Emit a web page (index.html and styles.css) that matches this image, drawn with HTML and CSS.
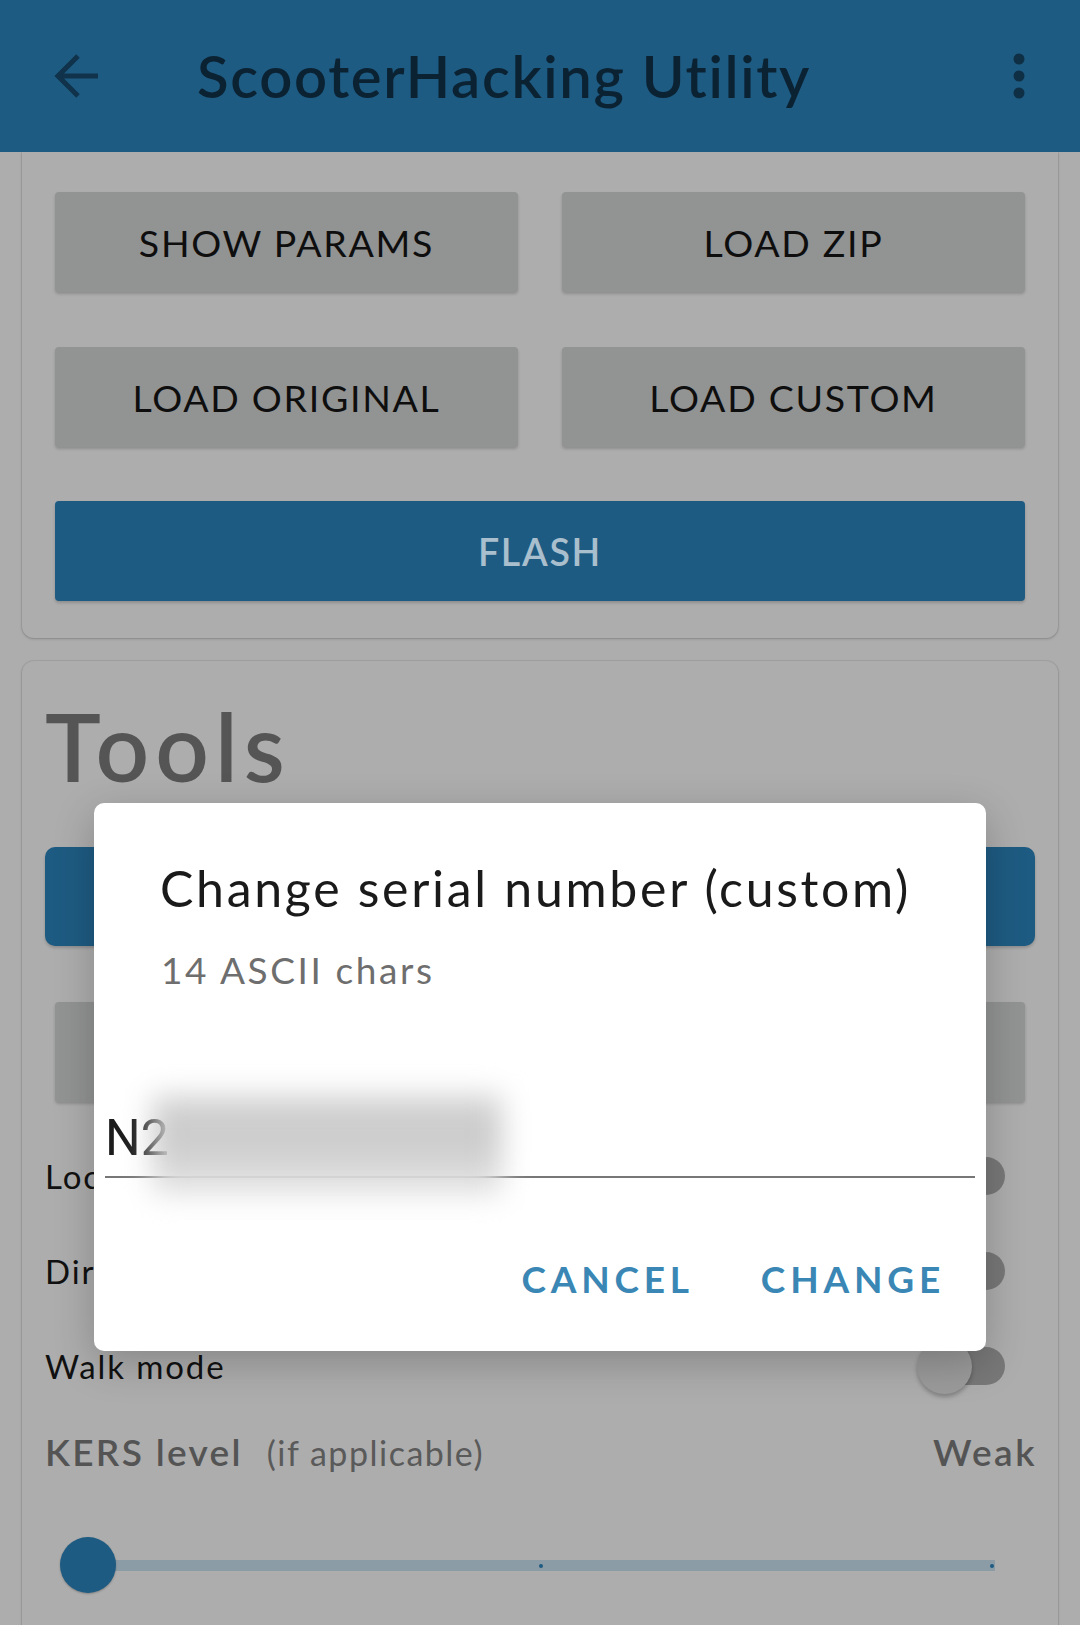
FILE: index.html
```html
<!DOCTYPE html>
<html lang="en">
<head>
<meta charset="utf-8">
<title>ScooterHacking Utility</title>
<link rel="stylesheet" href="styles.css">
</head>
<body>
<div class="screen">
  <header class="appbar">
    <svg class="back" width="46" height="46" viewBox="0 0 46 46" aria-hidden="true">
      <path d="M44 23 H4 M24 3 L4 23 L24 43" fill="none" stroke="#10324a" stroke-width="5"/>
    </svg>
    <h1 class="title">ScooterHacking Utility</h1>
    <svg class="menu" width="12" height="46" viewBox="0 0 12 46" aria-hidden="true">
      <circle cx="6" cy="6" r="5.5" fill="#0f2f45"/>
      <circle cx="6" cy="23" r="5.5" fill="#0f2f45"/>
      <circle cx="6" cy="40" r="5.5" fill="#0f2f45"/>
    </svg>
  </header>

  <main class="content">
    <section class="card card-top">
      <div class="btn-grid">
        <div class="btn">SHOW PARAMS</div>
        <div class="btn">LOAD ZIP</div>
        <div class="btn">LOAD ORIGINAL</div>
        <div class="btn">LOAD CUSTOM</div>
      </div>
      <div class="btn btn-primary flash">FLASH</div>
    </section>

    <section class="card card-tools">
      <h2 class="tools-title">Tools</h2>
      <div class="btn btn-primary wide" aria-label="Change serial number"></div>
      <div class="btn-grid tools-grid">
        <div class="btn" aria-label="Tool"></div>
        <div class="btn" aria-label="Tool"></div>
      </div>
      <div class="toggle-row"><span>Lock</span><span class="switch"><span class="thumb"></span></span></div>
      <div class="toggle-row"><span>Dire</span><span class="switch"><span class="thumb"></span></span></div>
      <div class="toggle-row"><span>Walk mode</span><span class="switch"><span class="thumb"></span></span></div>
      <div class="kers-row">
        <span class="kers-label">KERS level<small>(if applicable)</small></span>
        <span class="kers-value">Weak</span>
      </div>
      <div class="slider">
        <div class="track"><span class="tick mid"></span><span class="tick end"></span></div>
        <span class="slider-thumb"></span>
      </div>
    </section>
  </main>

  <div class="dialog" role="dialog">
    <h3 class="dialog-title">Change serial number (custom)</h3>
    <p class="dialog-sub">14 ASCII chars</p>
    <div class="input">N2</div>
    <div class="blur"></div>
    <div class="actions">
      <span class="action">CANCEL</span>
      <span class="action">CHANGE</span>
    </div>
  </div>
</div>
</body>
</html>
```

FILE: styles.css
```css
* { box-sizing: border-box; }
html, body { margin: 0; padding: 0; }
body {
  background: #adadad;
  font-family: "Lato", "Noto Sans", sans-serif;
}
.screen {
  position: relative;
  width: 1080px;
  height: 1625px;
  overflow: hidden;
  background: #adadad;
}

/* App bar */
.appbar {
  position: relative;
  z-index: 2;
  height: 152px;
  background: #1e5b82;
  display: flex;
  align-items: center;
  padding: 0 55px 0 54px;
}
.back { display: block; }
.title {
  margin: 0 0 0 97px;
  font-size: 58px;
  line-height: 70px;
  font-weight: 600;
  letter-spacing: 1.65px;
  color: #0b2233;
  flex: 1;
}
.menu { display: block; }

/* Cards */
.content { padding: 0 22px; }
.card {
  background: #adadad;
  border-radius: 12px;
  box-shadow: 0 0 0 1px rgba(0,0,0,0.06), 0 1px 3px rgba(0,0,0,0.18);
}
.card-top {
  border-radius: 0 0 12px 12px;
  padding: 40px 33px 37px;
}
.btn-grid {
  display: grid;
  grid-template-columns: 1fr 1fr;
  column-gap: 44px;
  row-gap: 55px;
}
.btn {
  height: 100px;
  display: flex;
  align-items: center;
  justify-content: center;
  background: #929393;
  border-radius: 4px;
  box-shadow: 0 2px 3px rgba(0,0,0,0.18);
  font-size: 37.5px;
  letter-spacing: 1.7px;
  color: #0e0e0e;
}
.btn-primary {
  background: #1e5b82;
  color: #a9bfcd;
  font-weight: 600;
}
.flash { margin-top: 54px; }

.card-tools {
  margin-top: 23px;
  padding: 38px 23px 200px;
}
.tools-title {
  margin: 0;
  font-size: 94px;
  line-height: 94px;
  font-weight: 600;
  letter-spacing: 6px;
  color: #555555;
}
.wide {
  margin-top: 54px;
  height: 99px;
  border-radius: 10px;
}
.tools-grid {
  margin: 56px 10px 0;
}
.toggle-row {
  height: 95px;
  display: flex;
  align-items: center;
  justify-content: space-between;
  padding-right: 30px;
  font-size: 33px;
  letter-spacing: 1.9px;
  color: #111111;
}
.tools-grid + .toggle-row { margin-top: 26px; }
.switch {
  position: relative;
  width: 80px;
  height: 38px;
  border-radius: 19px;
  background: #787878;
}
.thumb {
  position: absolute;
  left: -8px;
  top: -8px;
  width: 55px;
  height: 55px;
  border-radius: 50%;
  background: #9b9b9b;
  box-shadow: 0 3px 4px rgba(0,0,0,0.25);
}
.kers-row {
  margin-top: 14px;
  height: 50px;
  line-height: 50px;
  display: flex;
  justify-content: space-between;
  font-size: 37px;
  font-weight: 600;
  letter-spacing: 2.3px;
  color: #545454;
}
.kers-label small {
  font-size: 34px;
  font-weight: 400;
  letter-spacing: 1.5px;
  margin-left: 24px;
  color: #5a5a5a;
}
.kers-value { letter-spacing: 2.5px; margin-right: -2px; }
.slider {
  position: relative;
  height: 56px;
  margin: 60px 40px 0 15px;
  display: flex;
  align-items: center;
}
.track {
  position: relative;
  flex: 1;
  margin-left: 28px;
  height: 11px;
  background: #8b9ca6;
}
.tick {
  position: absolute;
  top: 4px;
  width: 4px;
  height: 4px;
  border-radius: 50%;
  background: #1e5b82;
}
.tick.mid { left: 49.7%; }
.tick.end { right: 1px; }
.slider-thumb {
  position: absolute;
  left: 0;
  top: 0;
  width: 56px;
  height: 56px;
  border-radius: 50%;
  background: #1d5b82;
  box-shadow: 0 1px 2px rgba(0,0,0,0.25);
}

/* Dialog */
.dialog {
  position: absolute;
  z-index: 5;
  left: 94px;
  top: 803px;
  width: 892px;
  height: 548px;
  background: #ffffff;
  border-radius: 10px;
  box-shadow: 0 12px 40px rgba(0,0,0,0.22);
  padding: 55px 11px 0;
}
.dialog-title {
  margin: 0 0 0 55px;
  font-size: 50px;
  line-height: 60px;
  font-weight: 400;
  letter-spacing: 2.7px;
  color: #1a1a1a;
}
.dialog-sub {
  margin: 30px 0 0 56px;
  font-size: 37px;
  line-height: 44px;
  letter-spacing: 2.6px;
  color: #6e6e6e;
}
.input {
  margin-top: 116px;
  padding: 0 0 8px 0;
  font-family: "Roboto", "Noto Sans", sans-serif;
  font-size: 50px;
  line-height: 60px;
  color: #1c1c1c;
  border-bottom: 2px solid #777777;
}
.blur {
  position: absolute;
  left: 58px;
  top: 292px;
  width: 350px;
  height: 100px;
  background: linear-gradient(#d4d4d4, #cacaca 45%, #e6e6e6);
  filter: blur(14px);
}
.actions {
  margin-top: 79px;
  display: flex;
  justify-content: flex-end;
  gap: 67px;
  padding-right: 30px;
}
.action {
  font-size: 37px;
  line-height: 44px;
  font-weight: 700;
  letter-spacing: 4.8px;
  color: #3a87b5;
}
```
